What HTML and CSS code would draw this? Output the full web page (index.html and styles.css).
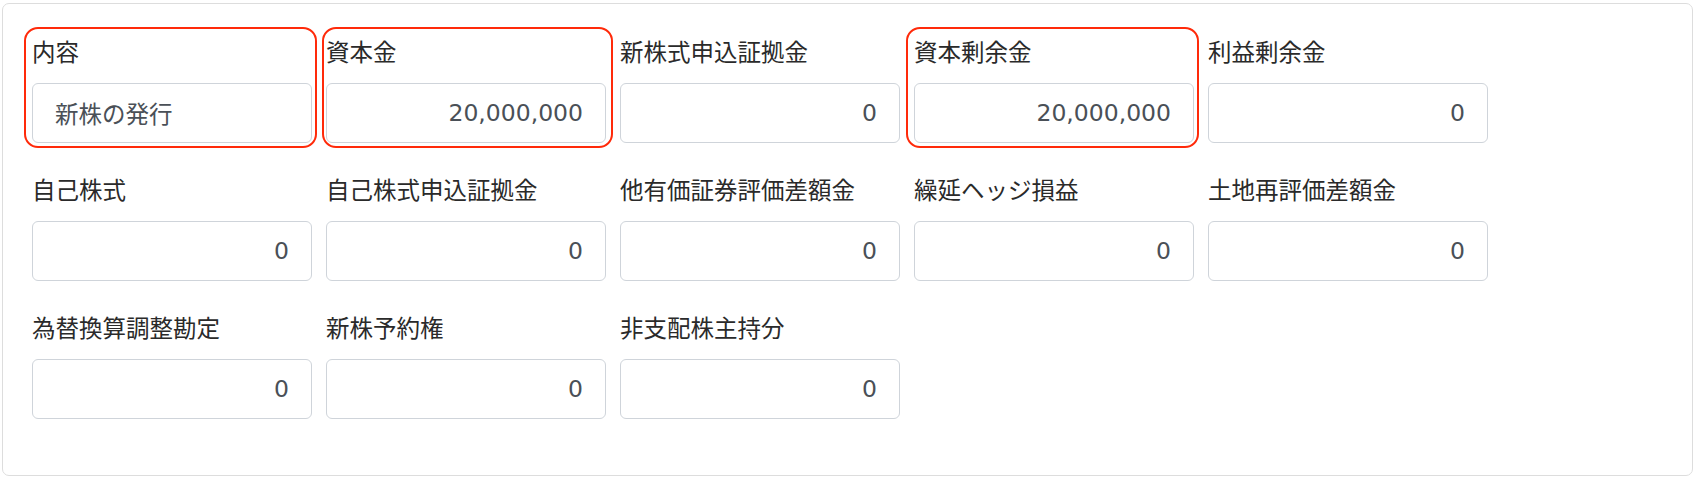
FILE: index.html
```html
<!DOCTYPE html>
<html lang="ja">
<head>
  <meta charset="UTF-8" />
  <meta name="viewport" content="width=device-width, initial-scale=1.0" />
  <title>株主資本等変動</title>
  <link rel="stylesheet" href="styles.css">
</head>

<body>
  <div class="card">
    <div class="campos">
      <div class="campo marcado">
        <label for="naiyo">内容</label>
        <input id="naiyo" class="texto" type="text" value="新株の発行" readonly>
      </div>
      <div class="campo marcado marcado-b">
        <label for="shihonkin">資本金</label>
        <input id="shihonkin" class="num" type="text" value="20,000,000" readonly>
      </div>
      <div class="campo">
        <label for="shinkabu">新株式申込証拠金</label>
        <input id="shinkabu" class="num" type="text" value="0" readonly>
      </div>
      <div class="campo marcado">
        <label for="shihonjoyo">資本剰余金</label>
        <input id="shihonjoyo" class="num" type="text" value="20,000,000" readonly>
      </div>
      <div class="campo">
        <label for="riekijoyo">利益剰余金</label>
        <input id="riekijoyo" class="num" type="text" value="0" readonly>
      </div>

      <div class="campo">
        <label for="jikokabu">自己株式</label>
        <input id="jikokabu" class="num" type="text" value="0" readonly>
      </div>
      <div class="campo">
        <label for="jikokabumoshikomi">自己株式申込証拠金</label>
        <input id="jikokabumoshikomi" class="num" type="text" value="0" readonly>
      </div>
      <div class="campo">
        <label for="sonota">他有価証券評価差額金</label>
        <input id="sonota" class="num" type="text" value="0" readonly>
      </div>
      <div class="campo">
        <label for="hedge">繰延ヘッジ損益</label>
        <input id="hedge" class="num" type="text" value="0" readonly>
      </div>
      <div class="campo">
        <label for="tochi">土地再評価差額金</label>
        <input id="tochi" class="num" type="text" value="0" readonly>
      </div>

      <div class="campo">
        <label for="kawase">為替換算調整勘定</label>
        <input id="kawase" class="num" type="text" value="0" readonly>
      </div>
      <div class="campo">
        <label for="yoyaku">新株予約権</label>
        <input id="yoyaku" class="num" type="text" value="0" readonly>
      </div>
      <div class="campo">
        <label for="hishihai">非支配株主持分</label>
        <input id="hishihai" class="num" type="text" value="0" readonly>
      </div>
    </div>
  </div>
</body>
</html>
```

FILE: styles.css
```css
:root {
  --text-color: #2a2a2a;
  --input-text: #4a5057;
  --input-border: #cfd4da;
  --card-border: #dddddd;
  --marca: #ff2a0a;
}

body {
  margin: 3px 4px 0 2px;
  background-color: #fff;
  color: var(--text-color);
  font-family: "Noto Sans CJK JP", sans-serif;
}

.card {
  border: 1px solid var(--card-border);
  border-radius: 7px;
  padding: 32px 29px 56px;
}

.campos {
  display: grid;
  grid-template-columns: repeat(5, 280px);
  column-gap: 14px;
  row-gap: 31px;
}

.campo {
  position: relative;
}

.campo label {
  display: block;
  font-size: 23.5px;
  line-height: 30px;
  margin-bottom: 17px;
  white-space: nowrap;
}

.campo input {
  display: block;
  width: 100%;
  height: 60px;
  box-sizing: border-box;
  padding: 0 22px;
  border: 1px solid var(--input-border);
  border-radius: 6px;
  background-color: #fff;
  color: var(--input-text);
  font-size: 23.5px;
  outline: none;
}

.texto {
  font-family: "Noto Sans CJK JP", sans-serif;
  text-align: left;
}

.num {
  font-family: "DejaVu Sans", "Noto Sans CJK JP", sans-serif;
  text-align: right;
}

/* marcação vermelha em volta dos campos alterados */
.marcado::after {
  content: "";
  position: absolute;
  top: -9px;
  left: -8px;
  right: -5px;
  bottom: -5px;
  border: 2px solid var(--marca);
  border-radius: 14px;
  pointer-events: none;
}

.marcado-b::after {
  left: -4px;
  right: -7px;
}
```
